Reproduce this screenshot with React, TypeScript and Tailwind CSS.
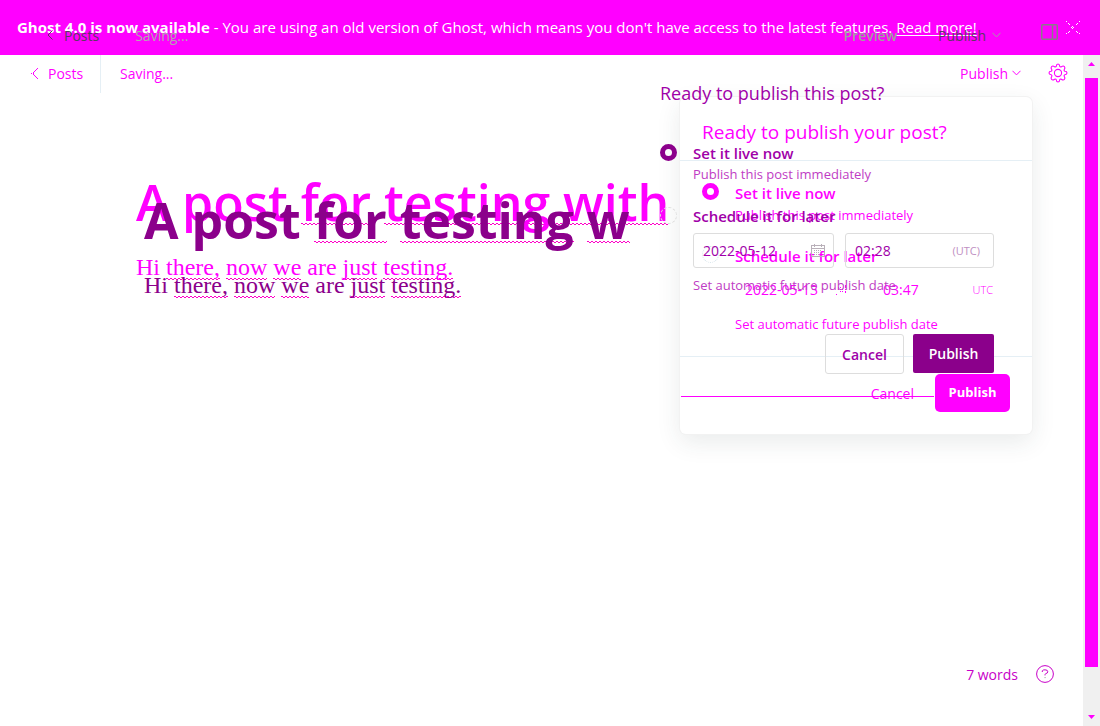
import React from "react";

type IconProps = { className?: string };

function Chevron({ className = "" }: IconProps) {
  return (
    <svg width="9" height="6" viewBox="0 0 9 6" fill="none" stroke="currentColor" className={className} aria-hidden="true">
      <path d="M0.5 0.8 L4.5 4.9 L8.5 0.8" />
    </svg>
  );
}

function BackArrow({ className = "" }: IconProps) {
  return (
    <svg width="6" height="10" viewBox="0 0 6 10" fill="none" stroke="currentColor" className={className} aria-hidden="true">
      <path d="M5.5 0.5 L1 5 L5.5 9.5" />
    </svg>
  );
}

function DottedBack() {
  return (
    <svg width="10" height="13" viewBox="0 0 10 13" fill="#f0f" shapeRendering="crispEdges" aria-hidden="true">
      <path d="M1 6h1v1H1zM3 5h1v1H3zM3 7h1v1H3zM4 4h1v1H4zM4 8h1v1H4zM5 3h1v1H5zM5 9h1v1H5zM7 1h1v1H7zM7 11h1v1H7zM3 6h1v1H3zM6 2h1v1H6zM6 10h1v1H6z" />
    </svg>
  );
}

function Gear() {
  return (
    <svg width="20" height="20" viewBox="0 0 20 20" fill="none" stroke="#f0f" strokeWidth="1.1" strokeLinejoin="round" aria-hidden="true">
      <circle cx="10" cy="10" r="3.6" />
      <path d="M8.3 3.2 Q8.4 1 10 1 Q11.6 1 11.7 3.2 Q12.2 4.3 13.4 3.8 Q15.2 2.4 16.4 3.6 Q17.6 4.8 16.2 6.6 Q15.7 7.8 16.8 8.3 Q19 8.4 19 10 Q19 11.6 16.8 11.7 Q15.7 12.2 16.2 13.4 Q17.6 15.2 16.4 16.4 Q15.2 17.6 13.4 16.2 Q12.2 15.7 11.7 16.8 Q11.6 19 10 19 Q8.4 19 8.3 16.8 Q7.8 15.7 6.6 16.2 Q4.8 17.6 3.6 16.4 Q2.4 15.2 3.8 13.4 Q4.3 12.2 3.2 11.7 Q1 11.6 1 10 Q1 8.4 3.2 8.3 Q4.3 7.8 3.8 6.6 Q2.4 4.8 3.6 3.6 Q4.8 2.4 6.6 3.8 Q7.8 4.3 8.3 3.2z" />
    </svg>
  );
}

function SidebarIcon() {
  return (
    <svg width="17" height="16" viewBox="0 0 17 16" fill="none" stroke="#8a7a8a" strokeWidth="1.5" aria-hidden="true">
      <rect x="0.75" y="0.75" width="15.5" height="14.5" rx="1" />
      <path d="M11.5 1v14" />
    </svg>
  );
}

function CloseIcon() {
  return (
    <svg width="14" height="14" viewBox="0 0 14 14" fill="#fff" shapeRendering="crispEdges" aria-hidden="true">
      <path d="M0 0h1v1H0zM2 2h1v1H2zM3 3h1v1H3zM13 0h1v1H13zM11 2h1v1H11zM10 3h1v1H10zM6 5h1v1H6zM7 6h1v1H7zM6 7h1v1H6zM5 6h1v1H5zM3 10h1v1H3zM2 11h1v1H2zM0 12h1v1H0zM10 10h1v1H10zM11 11h1v1H11zM13 12h1v1H13z" />
    </svg>
  );
}

function CalendarIcon({ className = "" }: IconProps) {
  return (
    <svg width="14" height="13" viewBox="0 0 14 13" fill="none" stroke="currentColor" className={className} aria-hidden="true">
      <rect x="0.5" y="1.5" width="13" height="11" />
      <path d="M0.5 4.5h13M3.5 0v3M10.5 0v3" />
      <path d="M3 6.5h8M3 8.5h8M3 10.5h6" strokeDasharray="1 1" />
    </svg>
  );
}

function CalendarDots() {
  return (
    <svg width="11" height="13" viewBox="0 0 11 13" fill="#f0f" shapeRendering="crispEdges" className="shrink-0" aria-hidden="true">
      <path d="M2 4h1v1H2zM4 4h1v1H4zM9 2h1v3H9zM2 6h1v1H2zM4 6h1v1H4zM6 6h1v1H6zM9 6h1v1H9zM4 8h1v1H4zM6 8h1v1H6zM9 8h1v2H9zM0 11h1v1H0z" />
    </svg>
  );
}

function HelpIcon() {
  return (
    <svg width="18" height="18" viewBox="0 0 18 18" fill="none" stroke="#c800c8" aria-hidden="true">
      <circle cx="9" cy="9" r="8.4" />
      <path d="M6.3 7V5.8Q7 4.8 9 4.8Q11.8 4.8 11.8 6.8Q11.8 8.2 9.6 8.7Q9 9 9 10.4" />
      <path d="M8.3 12.6h1.6" stroke="#bbb" />
    </svg>
  );
}

const squiggle =
  "bg-[linear-gradient(90deg,#ff00c8_50%,transparent_50%),linear-gradient(90deg,#ff00c8_50%,transparent_50%)] bg-[size:4px_1px] bg-repeat-x";

function Heading({ children }: { children: React.ReactNode }) {
  return <span className={`${squiggle} bg-[position:0_55px,2px_56px]`}>{children}</span>;
}

function Word({ children }: { children: React.ReactNode }) {
  return <span className={`${squiggle} bg-[position:0_24px,2px_25px]`}>{children}</span>;
}

function Paragraph() {
  return (
    <p className="mt-4 font-['Liberation_Serif',serif] text-[24px] leading-7">
      Hi <Word>there,</Word> <Word>now</Word> <Word>we</Word> are <Word>just</Word> <Word>testing.</Word>
    </p>
  );
}

function CurrentPopup() {
  return (
    <form className="absolute top-[97px] right-[68px] w-[352px] rounded-md bg-white text-[#f0f] shadow-[0_0_0_1px_#f2f2f2,0_8px_24px_rgba(40,60,60,0.10)]">
      <h2 className="h-[64px] border-b border-[#e5eff5] px-[22px] pt-[22px] text-[19px] leading-[26px]">Ready to publish your post?</h2>
      <div className="px-[22px] py-[21px] text-[13px] leading-[22px]">
        <div className="flex gap-4">
          <input id="now-a" name="when-a" type="radio" defaultChecked className="mt-px size-[17px] shrink-0 appearance-none rounded-full border-[5px] border-[#f0f]" />
          <div>
            <label htmlFor="now-a" className="block text-[15px] font-semibold">Set it live now</label>
            <p>Publish this post immediately</p>
          </div>
        </div>
        <div className="mt-[19px] flex gap-4">
          <input id="later-a" name="when-a" type="radio" className="mt-px size-[17px] shrink-0 appearance-none rounded-full border border-dotted border-[#d5e3ea]" />
          <div className="flex-1">
            <label htmlFor="later-a" className="block text-[15px] font-semibold">Schedule it for later</label>
            <div className="mt-[6px] flex h-[33px] gap-[14px] text-[14px]">
              <div className="flex w-[126px] items-center pr-[14px] pl-[10px]">
                <input aria-label="Publish date" defaultValue="2022-05-13" className="w-full min-w-0 bg-transparent outline-none" />
                <CalendarDots />
              </div>
              <div className="flex flex-1 items-center pr-[17px] pl-2">
                <input aria-label="Publish time" defaultValue="03:47" className="w-full min-w-0 bg-transparent outline-none" />
                <span className="text-[11px] font-light">UTC</span>
              </div>
            </div>
            <p className="mt-[7px]">Set automatic future publish date</p>
          </div>
        </div>
      </div>
      <div className="relative flex h-[78px] items-start justify-end gap-[21px] border-t border-[#e5eff5] pt-[17px] pr-[22px]">
        <div className="absolute top-[39px] left-px h-px w-[253px] bg-[#f0f]" />
        <button type="button" className="relative h-[38px] text-[14px]">Cancel</button>
        <button type="button" className="relative h-[38px] w-[75px] rounded-[5px] bg-[#f0f] text-[13px] font-bold text-white">Publish</button>
      </div>
    </form>
  );
}

function PreviousPopup() {
  return (
    <form className="absolute top-[80px] right-[106px] w-[334px] text-[#a000a8]">
      <h2 className="text-[18px] leading-[26px]">Ready to publish this post?</h2>
      <div className="mt-[37px] flex gap-4 text-[13px] leading-[21px]">
        <input id="now-b" name="when-b" type="radio" defaultChecked className="mt-px size-[17px] shrink-0 appearance-none rounded-full border-[5px] border-[#8b008b]" />
        <div>
          <label htmlFor="now-b" className="block text-[15px] font-semibold">Set it live now</label>
          <p className="text-[#c03cc4]">Publish this post immediately</p>
        </div>
      </div>
      <div className="mt-[21px] flex gap-4 text-[13px] leading-[21px]">
        <input id="later-b" name="when-b" type="radio" className="mt-px size-[17px] shrink-0 appearance-none rounded-full border border-dashed border-[#ddd]" />
        <div className="flex-1">
          <label htmlFor="later-b" className="block text-[15px] font-semibold">Schedule it for later</label>
          <div className="mt-[6px] flex h-[35px] gap-[11px] text-[14px]">
            <div className="flex w-[141px] items-center rounded-[3px] border border-[#ddd] pr-2 pl-[9px]">
              <input aria-label="Date" defaultValue="2022-05-12" className="w-full min-w-0 bg-transparent outline-none" />
              <CalendarIcon className="shrink-0 text-[#b9b0b9]" />
            </div>
            <div className="flex flex-1 items-center rounded-[3px] border border-[#ddd] pr-[13px] pl-[9px]">
              <input aria-label="Time" defaultValue="02:28" className="w-full min-w-0 bg-transparent outline-none" />
              <span className="text-[11px] text-[#c08fc2]">(UTC)</span>
            </div>
          </div>
          <p className="mt-[7px] text-[#c03cc4]">Set automatic future publish date</p>
        </div>
      </div>
      <div className="mt-[38px] flex justify-end gap-[9px] text-[14px] font-semibold">
        <button type="button" className="h-[40px] w-[79px] rounded-[3px] border border-[#ddd]">Cancel</button>
        <button type="button" className="h-[39px] w-[81px] rounded-[2px] bg-[#8b008b] text-white">Publish</button>
      </div>
    </form>
  );
}

function PreviousToolbar() {
  return (
    <div className="absolute inset-x-0 top-[23px] flex h-6 items-center pr-[42px] pl-[47px] text-[14px] text-[#5a3a62]">
      <a href="#posts" className="flex items-center gap-[11px]">
        <BackArrow />
        Posts
      </a>
      <span className="ml-[36px] text-[#b0a8b0]">Saving...</span>
      <button type="button" className="ml-auto font-semibold text-[#a0a0a0]">Preview</button>
      <button type="button" className="ml-[41px] flex items-center gap-[6px]">
        Publish
        <Chevron className="text-[#a0a0a0]" />
      </button>
      <button type="button" aria-label="Toggle sidebar" className="-mt-1.5 ml-[40px]">
        <SidebarIcon />
      </button>
    </div>
  );
}

function Scrollbar() {
  return (
    <div className="flex w-[17px] shrink-0 flex-col items-center bg-[#f0f0f0]" aria-hidden="true">
      <svg width="7" height="4" viewBox="0 0 7 4" fill="#f0f" className="mt-[7px]"><path d="M0 4L3.5 0L7 4z" /></svg>
      <div className="mt-[12px] mb-[48px] w-[13px] flex-1 bg-[#f0f]" />
      <svg width="7" height="4" viewBox="0 0 7 4" fill="#f0f" className="mb-[7px]"><path d="M0 0L3.5 4L7 0z" /></svg>
    </div>
  );
}

export default function App() {
  return (
    <div className="relative flex min-h-screen flex-col bg-white font-['Open_Sans','Noto_Sans',sans-serif]">
      <div className="flex h-[55px] shrink-0 items-center justify-between bg-[#f0f] pr-[20px] pl-[17px] text-[15px] text-white">
        <p className="whitespace-nowrap">
          <strong className="font-bold">Ghost 4.0 is now available</strong> - You are using an old version of Ghost, which means you don't have access to the latest features.{" "}
          <a href="#more" className="underline underline-offset-2">Read more!</a>
        </p>
        <button type="button" aria-label="Dismiss"><CloseIcon /></button>
      </div>

      <div className="flex flex-1">
        <div className="flex min-w-0 flex-1 flex-col">
          <header className="flex h-[38px] items-center pr-[15px] text-[14px] text-[#f0f]">
            <a href="#posts" className="flex h-full w-[101px] items-center gap-2 border-r border-[#e5eff5] pb-0.5 pl-[30px]">
              <DottedBack />
              Posts
            </a>
            <span className="ml-[19px] pb-0.5">Saving...</span>
            <button type="button" className="ml-auto flex items-center gap-1 pb-0.5">
              Publish
              <Chevron />
            </button>
            <button type="button" aria-label="Settings" className="ml-[27px] pb-0.5"><Gear /></button>
          </header>

          <main className="relative flex-1 pt-[74px] pl-[136px] text-[#f0f]">
            <h1 className="text-[50px] leading-[70px] font-semibold whitespace-nowrap">
              A post <Heading>for</Heading> <Heading>testing with</Heading>
            </h1>
            <Paragraph />
            <div className="absolute top-[92px] left-[144px] text-[#8b008b]">
              <h1 className="text-[50px] leading-[70px] font-bold whitespace-nowrap">
                A post <Heading>for</Heading> <Heading>testing</Heading> <Heading>w</Heading>
              </h1>
              <Paragraph />
            </div>
          </main>

          <footer className="flex h-[104px] items-center justify-end gap-[18px] pr-[29px] text-[14px] text-[#c800c8]">
            <span>7 words</span>
            <button type="button" aria-label="Help"><HelpIcon /></button>
          </footer>
        </div>
        <Scrollbar />
      </div>

      <PreviousToolbar />
      <CurrentPopup />
      <PreviousPopup />
    </div>
  );
}
